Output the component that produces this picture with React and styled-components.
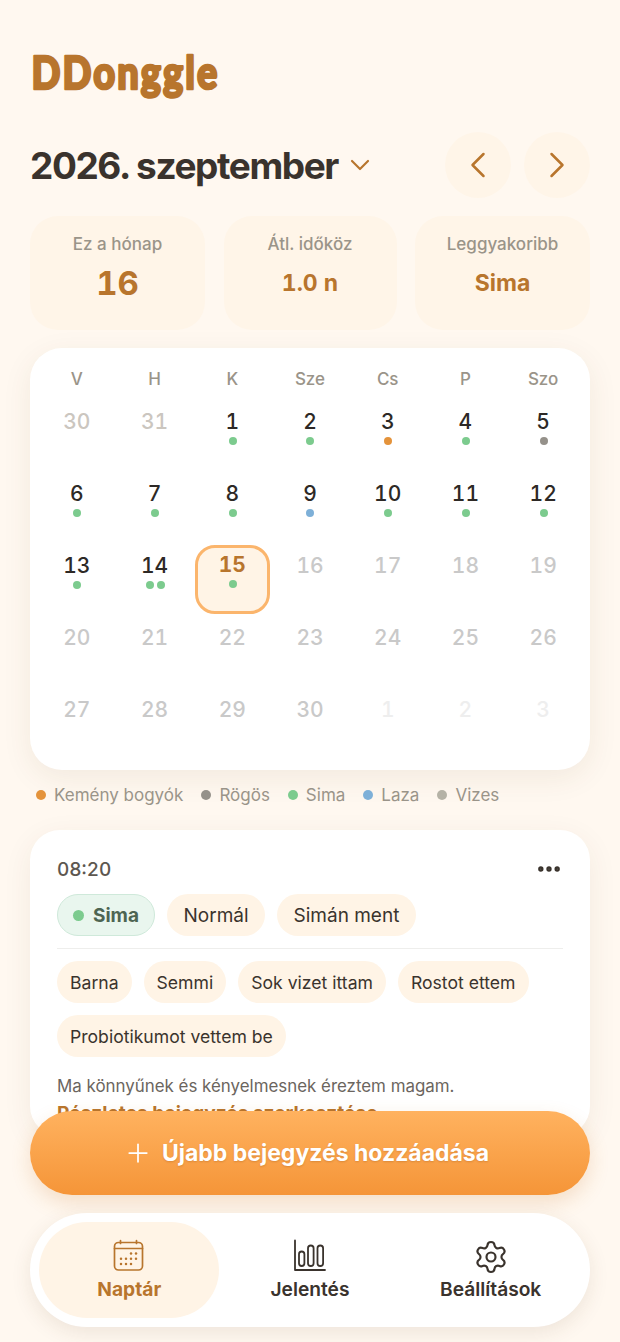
import React from "react";
import styled, { createGlobalStyle } from "styled-components";
import { ChevronDown, ChevronLeft, ChevronRight, Plus, Settings, Ellipsis } from "lucide-react";

const Global = createGlobalStyle`
  html, body { margin: 0; padding: 0; background: #fff8f0; }
  * { box-sizing: border-box; }
`;

const Screen = styled.div`
  position: relative;
  width: 620px;
  height: 1342px;
  overflow: hidden;
  padding: 0 30px;
  background: #fff8f0;
  font-family: Inter, "Noto Sans", sans-serif;
  color: #3a332d;
`;

const LogoSvg = styled.svg`
  display: block;
  width: 200px;
  height: 64px;
  margin-top: 42px;
  overflow: visible;
`;

const LogoText = styled.text`
  font-family: Lato, sans-serif;
  font-weight: 900;
  font-size: 46px;
  letter-spacing: 2.5px;
  fill: #b8752d;
  stroke: #b8752d;
  stroke-width: 2.6px;
  stroke-linejoin: round;
  stroke-linecap: round;
`;

const MonthRow = styled.div`
  display: flex;
  align-items: center;
  justify-content: space-between;
  margin-top: 26px;
  height: 66px;
`;

const MonthPicker = styled.div`
  display: flex;
  align-items: center;
  gap: 6px;
  color: #b8752d;
`;

const MonthTitle = styled.h1`
  margin: 0;
  font-size: 37px;
  font-weight: 700;
  letter-spacing: -1.4px;
  color: #3a332d;
`;

const NavButtons = styled.div`
  display: flex;
  gap: 13px;
`;

const RoundButton = styled.div`
  width: 66px;
  height: 66px;
  border-radius: 50%;
  background: #fff5e8;
  display: flex;
  align-items: center;
  justify-content: center;
  color: #b8752d;
`;

const Stats = styled.div`
  display: grid;
  grid-template-columns: 175px 173px 175px;
  justify-content: space-between;
  margin-top: 18px;
`;

const StatCard = styled.div`
  height: 114px;
  border-radius: 28px;
  background: #fff5e8;
  text-align: center;
  padding-top: 18px;
`;

const StatLabel = styled.div`
  font-size: 17px;
  line-height: 20px;
  color: #9a9489;
  font-weight: 500;
`;

const StatValue = styled.div`
  display: flex;
  align-items: center;
  justify-content: center;
  height: 40px;
  margin-top: 9px;
  font-weight: 700;
  color: #b8752d;
  font-variant-numeric: tabular-nums;
  font-size: ${(p) => (p.$big ? 33 : 23)}px;
`;

const CalendarCard = styled.section`
  margin-top: 18px;
  height: 422px;
  border-radius: 32px;
  background: #fff;
  box-shadow: 0 8px 30px rgba(90, 60, 30, 0.08);
  padding: 20px 8px 0;
`;

const Grid = styled.div`
  display: grid;
  grid-template-columns: repeat(7, 1fr);
`;

const DayHead = styled.div`
  text-align: center;
  font-size: 17px;
  line-height: 22px;
  font-weight: 500;
  color: #9a9489;
  margin-bottom: 10px;
`;

const Cell = styled.div`
  display: flex;
  flex-direction: column;
  align-items: center;
  height: 72px;
  padding-top: 9px;
`;

const Today = styled.div`
  display: flex;
  flex-direction: column;
  align-items: center;
  width: 75px;
  height: 69px;
  margin-top: -8px;
  padding-top: 4px;
  border: 3px solid #fbb56c;
  border-radius: 20px;
  background: #fff4e6;
`;

const DayNum = styled.div`
  font-size: 21px;
  line-height: 26px;
  font-variant-numeric: tabular-nums;
  font-weight: ${(p) => (p.$tone === "today" ? 700 : 500)};
  color: ${(p) =>
    p.$tone === "today"
      ? "#b8752d"
      : p.$tone === "prev"
      ? "#cbc6bf"
      : p.$tone === "future"
      ? "#c9c9c9"
      : p.$tone === "next"
      ? "#eeeeee"
      : "#2d2926"};
`;

const Dots = styled.div`
  display: flex;
  gap: 3px;
  margin: 2px 0 0 1px;
`;

const Dot = styled.span`
  display: block;
  flex: none;
  width: ${(p) => p.$size || 8}px;
  height: ${(p) => p.$size || 8}px;
  border-radius: 50%;
  background: ${(p) => p.$color};
`;

const Legend = styled.div`
  display: flex;
  margin: 14px 0 0 6px;
  height: 22px;
  align-items: center;
`;

const LegendItem = styled.div`
  display: flex;
  align-items: center;
  gap: 8px;
  margin-right: 18px;
  font-size: 17px;
  color: #9a9489;
`;

const EntryCard = styled.section`
  margin-top: 24px;
  height: 306px;
  border-radius: 30px;
  background: #fff;
  box-shadow: 0 8px 30px rgba(90, 60, 30, 0.07);
  padding: 24px 27px 0;
  overflow: hidden;
`;

const EntryHead = styled.div`
  display: flex;
  justify-content: space-between;
  align-items: center;
  height: 30px;
  color: #3a332d;
`;

const Time = styled.div`
  font-size: 19px;
  font-weight: 500;
  color: #5d5750;
  font-variant-numeric: tabular-nums;
`;

const Chips = styled.div`
  display: flex;
  flex-wrap: wrap;
  gap: 12px;
`;

const PrimaryChips = styled(Chips)`
  margin-top: 10px;
  padding-bottom: 12px;
  border-bottom: 1.5px solid #eeeeec;
`;

const SecondaryChips = styled(Chips)`
  margin-top: 12px;
  row-gap: 12px;
`;

const Chip = styled.div`
  display: flex;
  align-items: center;
  height: 42px;
  padding: 0 ${(p) => p.$px || 16.5}px;
  border-radius: 21px;
  background: #fff4e6;
  font-size: ${(p) => p.$fs || 19}px;
  color: #3a332d;
`;

const StatusChip = styled(Chip)`
  gap: 9px;
  padding: 0 15px;
  background: #e9f6ee;
  border: 1.5px solid #cfe9da;
  font-weight: 700;
  color: #4d6552;
`;

const Note = styled.p`
  margin: 18px 0 0;
  font-size: 16.9px;
  line-height: 22px;
  color: #6b655e;
`;

const EditLink = styled.div`
  font-size: 19.1px;
  line-height: 24px;
  margin-top: 4px;
  font-weight: 700;
  color: #b8752d;
`;

const AddButton = styled.button`
  position: absolute;
  left: 30px;
  top: 1111px;
  width: 560px;
  height: 84px;
  border: 0;
  border-radius: 42px;
  padding: 0 8px 0 0;
  background: linear-gradient(180deg, #ffb25f 0%, #f59538 100%);
  box-shadow: 0 8px 20px rgba(200, 120, 40, 0.2);
  display: flex;
  align-items: center;
  justify-content: center;
  gap: 9px;
  color: #fff;
  font-family: inherit;
  font-size: 23px;
  font-weight: 700;
  text-shadow: 0 1px 2px rgba(150, 80, 20, 0.3);
`;

const BottomNav = styled.nav`
  position: absolute;
  left: 30px;
  top: 1213px;
  width: 560px;
  height: 114px;
  border-radius: 57px;
  background: #fff;
  box-shadow: 0 6px 20px rgba(90, 60, 30, 0.1);
  padding: 9px;
  display: grid;
  grid-template-columns: repeat(3, 1fr);
`;

const Tab = styled.div`
  display: flex;
  flex-direction: column;
  align-items: center;
  justify-content: center;
  gap: 2px;
  width: 180px;
  border-radius: 48px;
  background: ${(p) => (p.$active ? "#fff4e6" : "transparent")};
  color: ${(p) => (p.$active ? "#b8752d" : "#3a332d")};
  font-size: 19.2px;
  font-weight: ${(p) => (p.$active ? 700 : 600)};
  justify-self: center;
`;

const GREEN = "#7ccb8e";
const ORANGE = "#e4933b";
const GRAY = "#95918a";
const BLUE = "#7eb0d8";
const SAND = "#b5b2a6";

const heads = ["V", "H", "K", "Sze", "Cs", "P", "Szo"];
const days = [
  { n: 30, t: "prev" }, { n: 31, t: "prev" }, { n: 1, d: [GREEN] }, { n: 2, d: [GREEN] }, { n: 3, d: [ORANGE] }, { n: 4, d: [GREEN] }, { n: 5, d: [GRAY] },
  { n: 6, d: [GREEN] }, { n: 7, d: [GREEN] }, { n: 8, d: [GREEN] }, { n: 9, d: [BLUE] }, { n: 10, d: [GREEN] }, { n: 11, d: [GREEN] }, { n: 12, d: [GREEN] },
  { n: 13, d: [GREEN] }, { n: 14, d: [GREEN, GREEN] }, { n: 15, t: "today", d: [GREEN] }, { n: 16, t: "future" }, { n: 17, t: "future" }, { n: 18, t: "future" }, { n: 19, t: "future" },
  { n: 20, t: "future" }, { n: 21, t: "future" }, { n: 22, t: "future" }, { n: 23, t: "future" }, { n: 24, t: "future" }, { n: 25, t: "future" }, { n: 26, t: "future" },
  { n: 27, t: "future" }, { n: 28, t: "future" }, { n: 29, t: "future" }, { n: 30, t: "future" }, { n: 1, t: "next" }, { n: 2, t: "next" }, { n: 3, t: "next" },
];
const legend = [
  ["Kemény bogyók", ORANGE], ["Rögös", GRAY], ["Sima", GREEN], ["Laza", BLUE], ["Vizes", SAND],
];
const tags = ["Barna", "Semmi", "Sok vizet ittam", "Rostot ettem", "Probiotikumot vettem be"];
const calendarDots = [[20, 14.5], [25, 14.5], [10, 19.7], [15, 19.7], [20, 19.7], [25, 19.7], [10, 25], [15, 25], [20, 25]];

const CalendarIcon = () => (
  <svg width="36" height="36" viewBox="0 0 36 36" fill="none" stroke="currentColor" strokeWidth="1.7" strokeLinecap="round" strokeLinejoin="round">
    <rect x="3.5" y="3.5" width="28" height="27.5" rx="4" />
    <path d="M3.5 9.5h28M9.5 1.5v3M25.5 1.5v3" />
    <g fill="currentColor" stroke="none">
      {calendarDots.map(([x, y]) => (
        <circle key={`${x}-${y}`} cx={x} cy={y} r="1.25" />
      ))}
    </g>
  </svg>
);

const ReportIcon = () => (
  <svg width="36" height="36" viewBox="0 0 36 36" fill="none" stroke="currentColor" strokeWidth="1.8" strokeLinecap="round" strokeLinejoin="round">
    <path d="M3 1.5v29.5h30" />
    <rect x="7" y="12.5" width="5.4" height="14.5" rx="2.7" />
    <rect x="16" y="6.5" width="5.6" height="20.5" rx="2.8" />
    <rect x="25.5" y="6.5" width="5.6" height="20.5" rx="2.8" />
  </svg>
);

const DayContent = ({ d }) => (
  <>
    <DayNum $tone={d.t}>{d.n}</DayNum>
    {d.d && (
      <Dots>
        {d.d.map((c, i) => (
          <Dot key={i} $color={c} />
        ))}
      </Dots>
    )}
  </>
);

export default function App() {
  return (
    <Screen>
      <Global />
      <LogoSvg viewBox="0 0 200 64">
        <LogoText x="1.5" y="47" textLength="188" lengthAdjust="spacingAndGlyphs">DDonggle</LogoText>
      </LogoSvg>
      <MonthRow>
        <MonthPicker>
          <MonthTitle>2026. szeptember</MonthTitle>
          <ChevronDown size={32} strokeWidth={1.6} />
        </MonthPicker>
        <NavButtons>
          <RoundButton><ChevronLeft size={44} strokeWidth={1.35} /></RoundButton>
          <RoundButton><ChevronRight size={44} strokeWidth={1.35} /></RoundButton>
        </NavButtons>
      </MonthRow>
      <Stats>
        <StatCard><StatLabel>Ez a hónap</StatLabel><StatValue $big>16</StatValue></StatCard>
        <StatCard><StatLabel>Átl. időköz</StatLabel><StatValue>1.0 n</StatValue></StatCard>
        <StatCard><StatLabel>Leggyakoribb</StatLabel><StatValue>Sima</StatValue></StatCard>
      </Stats>
      <CalendarCard>
        <Grid>
          {heads.map((h) => <DayHead key={h}>{h}</DayHead>)}
          {days.map((d, i) => (
            <Cell key={i}>
              {d.t === "today" ? <Today><DayContent d={d} /></Today> : <DayContent d={d} />}
            </Cell>
          ))}
        </Grid>
      </CalendarCard>
      <Legend>
        {legend.map(([l, c]) => (
          <LegendItem key={l}><Dot $size={10} $color={c} />{l}</LegendItem>
        ))}
      </Legend>
      <EntryCard>
        <EntryHead>
          <Time>08:20</Time>
          <Ellipsis size={28} strokeWidth={2.6} />
        </EntryHead>
        <PrimaryChips>
          <StatusChip><Dot $size={11} $color={GREEN} />Sima</StatusChip>
          <Chip>Normál</Chip>
          <Chip>Simán ment</Chip>
        </PrimaryChips>
        <SecondaryChips>
          {tags.map((t) => <Chip key={t} $fs={17.6} $px={13}>{t}</Chip>)}
        </SecondaryChips>
        <Note>Ma könnyűnek és kényelmesnek éreztem magam.</Note>
        <EditLink>Részletes bejegyzés szerkesztése</EditLink>
      </EntryCard>
      <AddButton><Plus size={30} strokeWidth={1.4} />Újabb bejegyzés hozzáadása</AddButton>
      <BottomNav>
        <Tab $active><CalendarIcon />Naptár</Tab>
        <Tab><ReportIcon />Jelentés</Tab>
        <Tab><Settings size={36} strokeWidth={1.45} />Beállítások</Tab>
      </BottomNav>
    </Screen>
  );
}
